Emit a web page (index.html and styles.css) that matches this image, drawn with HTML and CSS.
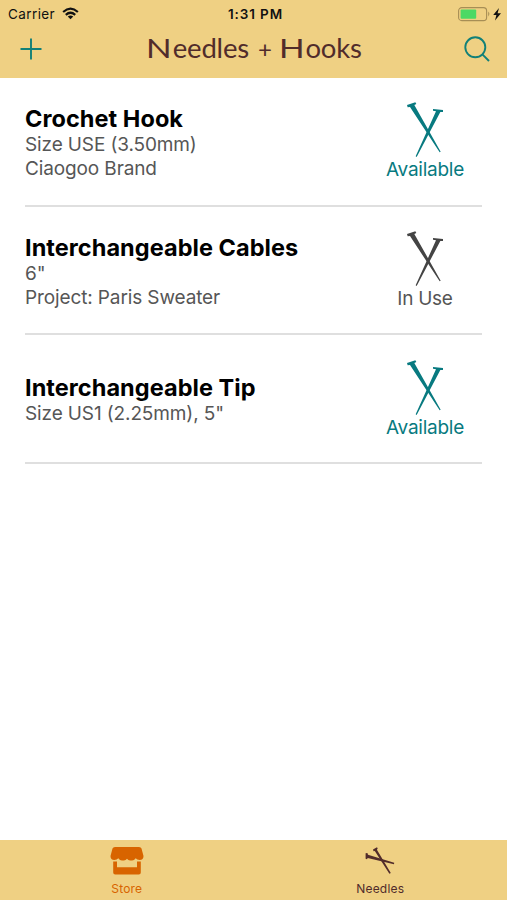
FILE: index.html
```html
<!DOCTYPE html>
<html lang="en">
<head>
    <meta charset="UTF-8">
    <title>Needles + Hooks</title>
    <link rel="stylesheet" href="styles.css">
</head>
<body>
    <svg class="defs" width="0" height="0">
        <symbol id="needles" viewBox="105 30 120 180">
            <path d="M111 45 L136 37 L139 42 L133 45 L212 185 L209 187 L120 51 L113 52 Z"/>
            <path d="M189 57 L219 60 L219 66 L211 66 L140 201 L137 199 L198 64 L189 62 Z"/>
        </symbol>
    </svg>
    <div class="app">
        <header class="header">
            <div class="status-bar">
                <div class="carrier">
                    <span>Carrier</span>
                    <svg class="wifi" viewBox="0 0 18 13">
                        <g fill="none" stroke="#111" stroke-width="2.3">
                            <path d="M1.2 4.9 Q9 -2 16.8 4.9"/>
                            <path d="M4 7.9 Q9 3.5 14 7.9"/>
                        </g>
                        <path fill="#111" d="M6.1 9.7 Q9 7.4 11.9 9.7 L9 12.6 Z"/>
                    </svg>
                </div>
                <span class="time">1:31 PM</span>
                <svg class="battery" viewBox="0 0 44 16">
                    <rect x=".6" y="1.6" width="28" height="13" rx="3.2" fill="none" stroke="#a78e55" stroke-width="1.1"/>
                    <rect x="2.6" y="3.5" width="15.6" height="9.2" rx="1" fill="#4cd964"/>
                    <path d="M30.2 5.6 Q32.6 8 30.2 10.4 Z" fill="#a78e55"/>
                    <path d="M41 2 L35.2 9 H38.4 L37 14.4 L43 7.2 H39.6 Z" fill="#111"/>
                </svg>
            </div>
            <div class="nav-bar">
                <svg class="add" viewBox="0 0 22 22">
                    <path d="M11 .5 V21.5 M.5 11 H21.5"/>
                </svg>
                <h1><span class="cap">N</span><span class="word">eedles</span><span class="plus">+</span><span class="cap">H</span><span class="word">ooks</span></h1>
                <svg class="search" viewBox="0 0 26 26">
                    <circle cx="11.3" cy="11.3" r="10"/>
                    <path d="M18.4 18.4 L25 25"/>
                </svg>
            </div>
        </header>
        <main class="list">
            <div class="item">
                <div class="details">
                    <h2>Crochet Hook</h2>
                    <p>Size USE (3.50mm)</p>
                    <p>Ciaogoo Brand</p>
                </div>
                <div class="status available">
                    <svg><use href="#needles"/></svg>
                    <span>Available</span>
                </div>
            </div>
            <div class="item">
                <div class="details">
                    <h2>Interchangeable Cables</h2>
                    <p>6"</p>
                    <p>Project: Paris Sweater</p>
                </div>
                <div class="status">
                    <svg><use href="#needles"/></svg>
                    <span>In Use</span>
                </div>
            </div>
            <div class="item">
                <div class="details">
                    <h2>Interchangeable Tip</h2>
                    <p>Size US1 (2.25mm), 5"</p>
                </div>
                <div class="status available">
                    <svg><use href="#needles"/></svg>
                    <span>Available</span>
                </div>
            </div>
        </main>
        <nav class="tab-bar">
            <div class="tab active">
                <svg viewBox="0 0 34 28">
                    <path d="M5 0 H29 Q31 0 31.5 1.5 L33.5 9 Q33.5 13 29.7 13 Q27 13 25.7 11.2 Q23.8 14 21.2 13.4 Q18.5 14 17 11.8 Q15.5 14 12.8 13.4 Q10.2 14 8.3 11.2 Q7 13 4.3 13 Q.5 13 .5 9 L2.5 1.5 Q3 0 5 0 Z"/>
                    <path d="M3.2 14.5 H7 V20.2 H27 V14.5 H30.8 V25.5 Q30.8 27.5 28.8 27.5 H5.2 Q3.2 27.5 3.2 25.5 Z"/>
                </svg>
                <span>Store</span>
            </div>
            <div class="tab">
                <svg viewBox="0 0 34 28">
                    <path d="M2.6 6.3 L4.4 6 L5 7.8 L31.2 15.8 L31 17.2 L4.7 11 L4 12.2 L2.6 11.7 Z"/>
                    <path d="M10 2.4 L14 .2 L14.7 1.6 L13.9 2.7 L27.8 26 L26.4 26.8 L11.8 4.1 L10.5 4.2 Z"/>
                </svg>
                <span>Needles</span>
            </div>
        </nav>
    </div>
</body>
</html>
```
FILE: styles.css
```css
body {
    margin: 0;
    font-family: Inter, "Liberation Sans", sans-serif;
    background-color: #fff;
}
.defs {
    display: block;
}
.app {
    display: flex;
    flex-direction: column;
    width: 507px;
    height: 900px;
    overflow: hidden;
}
.header {
    height: 78px;
    background-color: #efd083;
}
.status-bar {
    display: grid;
    grid-template-columns: 1fr auto 1fr;
    align-items: center;
    height: 27px;
    padding: 0 5px 0 8px;
    font-size: 13.5px;
    color: #111;
}
.carrier {
    display: flex;
    align-items: center;
    gap: 7px;
    letter-spacing: 0.4px;
}
.wifi {
    width: 17px;
    height: 13px;
}
.time {
    padding-left: 1px;
    font-weight: 600;
    letter-spacing: 0.9px;
}
.battery {
    width: 44px;
    height: 16px;
    justify-self: end;
}
.nav-bar {
    display: flex;
    align-items: center;
    justify-content: space-between;
    height: 43px;
    padding: 0 17px 0 20px;
}
.nav-bar svg {
    fill: none;
    stroke: #128078;
    stroke-width: 1.9;
}
.add {
    width: 22px;
    height: 22px;
}
.search {
    width: 26px;
    height: 26px;
}
h1 {
    display: flex;
    margin: 0 0 0 2px;
    font-family: Lato, sans-serif;
    font-size: 27.5px;
    font-weight: 400;
    line-height: 34px;
    color: #512c2b;
}
.cap {
    width: 26.5px;
    transform: scaleX(1.22);
    transform-origin: left;
}
.word {
    letter-spacing: -0.2px;
}
.plus {
    width: 21px;
    margin: 1px 0 0 9px;
    font-size: 24px;
}
.list {
    flex: 1;
    padding: 0 25px;
}
.item {
    display: flex;
    align-items: center;
    justify-content: space-between;
    box-sizing: border-box;
    height: 128.7px;
    border-bottom: 2px solid #dfdfdf;
}
.details {
    padding-top: 3px;
}
h2 {
    margin: 0;
    font-size: 23.5px;
    font-weight: 700;
    line-height: 28px;
    letter-spacing: 0.05px;
    color: #000;
}
.details p {
    margin: 0;
    font-size: 19px;
    line-height: 24px;
    letter-spacing: -0.12px;
    color: #565656;
}
.status {
    display: flex;
    flex-direction: column;
    align-items: center;
    width: 114px;
    font-size: 19px;
    line-height: 24px;
    letter-spacing: -0.25px;
    color: #555;
    fill: #444;
}
.status svg {
    width: 40px;
    height: 60px;
    margin-bottom: -2px;
}
.available {
    color: #087a80;
    fill: #087a80;
}
.tab-bar {
    display: flex;
    height: 60px;
    background-color: #efd083;
}
.tab {
    flex: 1;
    display: flex;
    flex-direction: column;
    align-items: center;
    padding-top: 7px;
    font-size: 12px;
    line-height: 16px;
    letter-spacing: 0.2px;
    color: #512c2b;
    fill: #512c2b;
}
.tab svg {
    width: 34px;
    height: 28px;
    margin-bottom: 6px;
}
.active {
    color: #d86400;
    fill: #d86400;
}
```
